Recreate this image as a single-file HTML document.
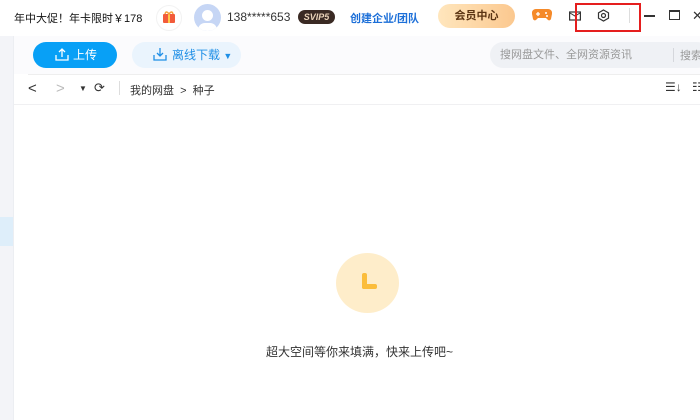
<!DOCTYPE html>
<html><head><meta charset="utf-8"><style>
*{margin:0;padding:0;box-sizing:border-box}
body{width:700px;height:420px;overflow:hidden;background:#fff;font-family:"Liberation Sans","Noto Sans CJK SC",sans-serif;position:relative;color:#222}
.a{position:absolute;white-space:nowrap}
</style></head><body>
<div class="a" style="left:0;top:0;width:700px;height:36px;background:#fff"></div>
<div class="a" style="left:14px;top:10px;font-size:11px;color:#111">年中大促！年卡限时￥178</div>
<div class="a" style="left:156px;top:5px;width:26px;height:26px;border-radius:13px;border:1px solid #f2f2f2"></div>
<svg class="a" style="left:162px;top:10px" width="14" height="14" viewBox="0 0 14 14"><rect x="1" y="4" width="12" height="9" rx="1" fill="#f25b3a"/><rect x="6" y="4" width="2" height="9" fill="#ffc94a"/><path d="M3 4 Q4 0 7 4 Q10 0 11 4" stroke="#f5a03a" stroke-width="1.5" fill="none"/></svg>
<div class="a" style="left:194px;top:4px;width:27px;height:27px;border-radius:14px;background:#c6d6f5;overflow:hidden"><div class="a" style="left:8px;top:6px;width:11px;height:11px;border-radius:6px;background:#fff"></div><div class="a" style="left:4px;top:19px;width:19px;height:14px;border-radius:9px;background:#fff"></div></div>
<div class="a" style="left:227px;top:10px;font-size:12px;color:#333">138*****653</div>
<div class="a" style="left:298px;top:10px;width:37px;height:14px;border-radius:7px;background:#3a2a24;color:#e9d2b8;font-size:9px;font-style:italic;font-weight:bold;text-align:center;line-height:14px">SVIP5</div>
<div class="a" style="left:350px;top:10px;font-size:11px;color:#1c6fd8;font-weight:bold">创建企业/团队</div>
<div class="a" style="left:438px;top:4px;width:77px;height:24px;border-radius:12px;background:linear-gradient(90deg,#ffe6bd,#fbc88f);font-size:11px;font-weight:bold;color:#5b3413;text-align:center;line-height:24px">会员中心</div>
<svg class="a" style="left:532px;top:8px" width="20" height="14" viewBox="0 0 20 14"><path d="M4 1h12a4 4 0 0 1 4 5l-1 5a2 2 0 0 1-3 1l-2-2H6l-2 2a2 2 0 0 1-3-1L0 6a4 4 0 0 1 4-5z" fill="#f58a2a"/><path d="M4 6h4M6 4v4" stroke="#fff" stroke-width="1.3"/><circle cx="14" cy="5" r="1" fill="#fff"/><circle cx="15" cy="8" r="1" fill="#fff"/></svg>
<svg class="a" style="left:569px;top:10px" width="12" height="11" viewBox="0 0 12 11"><rect x="0.6" y="2" width="10.8" height="8" fill="none" stroke="#333" stroke-width="1.2"/><path d="M1 3l5 3 5-3" stroke="#333" fill="none"/></svg>
<svg class="a" style="left:597px;top:9px" width="13" height="13" viewBox="0 0 13 13"><path d="M6.5 1l5 2.8v5.4l-5 2.8-5-2.8V3.8z" fill="none" stroke="#333" stroke-width="1.2"/><circle cx="6.5" cy="6.5" r="2" fill="none" stroke="#333" stroke-width="1.2"/></svg>
<div class="a" style="left:575px;top:3px;width:66px;height:29px;border:2px solid #e51e1e"></div>
<div class="a" style="left:629px;top:8px;width:1px;height:15px;background:#ddd"></div>
<div class="a" style="left:644px;top:15px;width:11px;height:1.5px;background:#333"></div>
<div class="a" style="left:669px;top:10px;width:11px;height:10px;border:1.5px solid #333;border-top-width:2px"></div>
<div class="a" style="left:692px;top:8px;font-size:13px;color:#333">✕</div>

<div class="a" style="left:0;top:36px;width:14px;height:384px;background:#f3f4f8"></div>
<div class="a" style="left:0;top:217px;width:13px;height:29px;background:#deeefa"></div>
<div class="a" style="left:13px;top:36px;width:1px;height:384px;background:#eceef2"></div>
<div class="a" style="left:14px;top:36px;width:686px;height:38px;background:#fbfbfd"></div>
<div class="a" style="left:33px;top:42px;width:84px;height:26px;border-radius:13px;background:#08a0f6;color:#fff;font-size:12px;line-height:26px;padding-left:40px">上传</div>
<svg class="a" style="left:55px;top:47px" width="14" height="14" viewBox="0 0 14 14"><path d="M7 10V2M4 5l3-3 3 3M1 8v5h12V8" stroke="#fff" stroke-width="1.3" fill="none"/></svg>
<div class="a" style="left:132px;top:42px;width:109px;height:26px;border-radius:13px;background:#eaf4fd;color:#1f8fe6;font-size:12px;line-height:26px;padding-left:40px">离线下载 <span style="font-size:9px">▼</span></div>
<svg class="a" style="left:153px;top:47px" width="14" height="14" viewBox="0 0 14 14"><path d="M7 1v8M4 6l3 3 3-3M1 8v5h12V8" stroke="#1f8fe6" stroke-width="1.3" fill="none"/></svg>
<div class="a" style="left:490px;top:42px;width:220px;height:26px;border-radius:13px;background:#eff1f5;font-size:11px;color:#999;line-height:26px;padding-left:10px">搜网盘文件、全网资源资讯</div>
<div class="a" style="left:673px;top:48px;width:1px;height:14px;background:#d5d7dc"></div>
<div class="a" style="left:680px;top:47px;font-size:11px;color:#999">搜索</div>
<div class="a" style="left:28px;top:74px;width:672px;height:1px;background:#eee"></div>
<div class="a" style="left:28px;top:80px;font-size:15px;color:#333">&lt;</div>
<div class="a" style="left:56px;top:80px;font-size:15px;color:#bbb">&gt;</div>
<div class="a" style="left:79px;top:84px;font-size:8px;color:#333">▼</div>
<div class="a" style="left:94px;top:80px;font-size:13px;color:#333">⟳</div>
<div class="a" style="left:119px;top:81px;width:1px;height:14px;background:#ddd"></div>
<div class="a" style="left:130px;top:82px;font-size:11px;color:#333">我的网盘 &nbsp;&gt;&nbsp; 种子</div>
<div class="a" style="left:665px;top:80px;font-size:12px;color:#333">☰↓</div>
<div class="a" style="left:692px;top:80px;font-size:12px;color:#333">☷</div>
<div class="a" style="left:14px;top:104px;width:686px;height:1px;background:#f0f0f2"></div>

<div class="a" style="left:336px;top:253px;width:63px;height:60px;border-radius:50%;background:#feedca"></div>
<div class="a" style="left:362px;top:273px;width:5px;height:16px;border-radius:2px;background:#fbbd3c"></div>
<div class="a" style="left:362px;top:284px;width:15px;height:5px;border-radius:2px;background:#fbbd3c"></div>
<div class="a" style="left:266px;top:343px;font-size:12px;color:#333">超大空间等你来填满，快来上传吧~</div>
</body></html>
